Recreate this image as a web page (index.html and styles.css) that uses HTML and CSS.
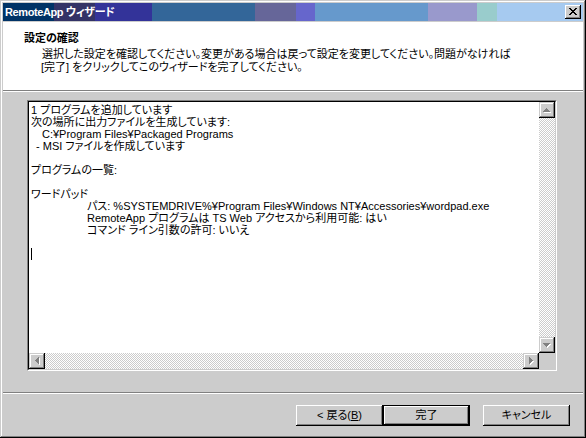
FILE: index.html
```html
<!DOCTYPE html>
<html lang="ja">
<head>
<meta charset="utf-8">
<title>RemoteApp ウィザード</title>
<link rel="stylesheet" href="styles.css">
</head>
<body>
<div class="window">
  <div class="titlebar">
    <span class="title-text">RemoteApp ウィザード</span>
    <span class="close-btn">
      <svg width="16" height="14" viewBox="0 0 16 14" shape-rendering="crispEdges">
        <g fill="#000">
          <rect x="4" y="3" width="2" height="1"/><rect x="10" y="3" width="2" height="1"/>
          <rect x="5" y="4" width="2" height="1"/><rect x="9" y="4" width="2" height="1"/>
          <rect x="6" y="5" width="4" height="1"/>
          <rect x="7" y="6" width="2" height="1"/>
          <rect x="6" y="7" width="4" height="1"/>
          <rect x="5" y="8" width="2" height="1"/><rect x="9" y="8" width="2" height="1"/>
          <rect x="4" y="9" width="2" height="1"/><rect x="10" y="9" width="2" height="1"/>
        </g>
      </svg>
    </span>
  </div>
  <div class="client">
    <div class="header">
      <div class="header-title">設定の確認</div>
      <div class="header-desc">
        <div>選択した設定を確認してください。変更がある場合は戻って設定を変更してください。問題がなければ</div>
        <div class="desc-2">[完了] をクリックしてこのウィザードを完了してください。</div>
      </div>
    </div>
    <div class="main">
      <div class="field">
        <div class="field-inner">
          <div class="text">
            <div class="line">1 プログラムを追加しています</div>
            <div class="line">次の場所に出力ファイルを生成しています:</div>
            <div class="line ind-a">C:¥Program Files¥Packaged Programs</div>
            <div class="line ind-b">- MSI ファイルを作成しています</div>
            <div class="line"></div>
            <div class="line">プログラムの一覧:</div>
            <div class="line"></div>
            <div class="line">ワードパッド</div>
            <div class="line ind-tab">パス: %SYSTEMDRIVE%¥Program Files¥Windows NT¥Accessories¥wordpad.exe</div>
            <div class="line ind-tab">RemoteApp プログラムは TS Web アクセスから利用可能: はい</div>
            <div class="line ind-tab">コマンド ライン引数の許可: いいえ</div>
            <div class="line"></div>
            <div class="line"><span class="caret"></span></div>
          </div>
          <div class="vscroll">
            <span class="sbtn">
              <svg width="16" height="16" viewBox="0 0 16 16" shape-rendering="crispEdges">
                <g fill="#fff"><rect x="8" y="7" width="1" height="1"/><rect x="7" y="8" width="3" height="1"/><rect x="6" y="9" width="5" height="1"/><rect x="5" y="10" width="7" height="1"/></g>
                <g fill="#808080"><rect x="7" y="6" width="1" height="1"/><rect x="6" y="7" width="3" height="1"/><rect x="5" y="8" width="5" height="1"/><rect x="4" y="9" width="7" height="1"/></g>
              </svg>
            </span>
            <span class="track"></span>
            <span class="sbtn">
              <svg width="16" height="16" viewBox="0 0 16 16" shape-rendering="crispEdges">
                <g fill="#fff"><rect x="5" y="7" width="7" height="1"/><rect x="6" y="8" width="5" height="1"/><rect x="7" y="9" width="3" height="1"/><rect x="8" y="10" width="1" height="1"/></g>
                <g fill="#808080"><rect x="4" y="6" width="7" height="1"/><rect x="5" y="7" width="5" height="1"/><rect x="6" y="8" width="3" height="1"/><rect x="7" y="9" width="1" height="1"/></g>
              </svg>
            </span>
          </div>
          <div class="hscroll">
            <span class="sbtn">
              <svg width="16" height="16" viewBox="0 0 16 16" shape-rendering="crispEdges">
                <g fill="#fff"><rect x="7" y="8" width="1" height="1"/><rect x="8" y="7" width="1" height="3"/><rect x="9" y="6" width="1" height="5"/><rect x="10" y="5" width="1" height="7"/></g>
                <g fill="#808080"><rect x="6" y="7" width="1" height="1"/><rect x="7" y="6" width="1" height="3"/><rect x="8" y="5" width="1" height="5"/><rect x="9" y="4" width="1" height="7"/></g>
              </svg>
            </span>
            <span class="track"></span>
            <span class="sbtn">
              <svg width="16" height="16" viewBox="0 0 16 16" shape-rendering="crispEdges">
                <g fill="#fff"><rect x="7" y="5" width="1" height="7"/><rect x="8" y="6" width="1" height="5"/><rect x="9" y="7" width="1" height="3"/><rect x="10" y="8" width="1" height="1"/></g>
                <g fill="#808080"><rect x="6" y="4" width="1" height="7"/><rect x="7" y="5" width="1" height="5"/><rect x="8" y="6" width="1" height="3"/><rect x="9" y="7" width="1" height="1"/></g>
              </svg>
            </span>
          </div>
          <div class="corner"></div>
        </div>
      </div>
    </div>
    <div class="footer">
      <button class="btn">&lt; 戻る(<u>B</u>)</button>
      <button class="btn btn-default"><span>完了</span></button>
      <button class="btn btn-cancel">キャンセル</button>
    </div>
  </div>
</div>
</body>
</html>
```
FILE: styles.css
```css
* { box-sizing: border-box; }

html, body {
  margin: 0;
  padding: 0;
  background: #cccccc;
}

body {
  font-family: "Liberation Sans", "Noto Sans CJK JP", sans-serif;
  font-size: 11px;
  color: #000;
  font-feature-settings: "palt";
}

.window {
  width: 586px;
  height: 438px;
  padding: 3px;
  background: #cccccc;
  box-shadow: inset -1px -1px #000, inset 1px 1px #cccccc, inset -2px -2px #808080, inset 2px 2px #ffffff;
  display: flex;
  flex-direction: column;
}

.titlebar {
  height: 18px;
  margin-bottom: 1px;
  display: flex;
  align-items: center;
  padding: 0 2px;
  background: linear-gradient(to right,
    #003366 0 51px,
    #333366 51px 92px,
    #333399 92px 149px,
    #336699 149px 252px,
    #666699 252px 293px,
    #6666cc 293px 312px,
    #6699cc 312px 425px,
    #9999cc 425px 474px,
    #99cccc 474px 494px,
    #a6caf0 494px 100%);
}

.title-text {
  color: #fff;
  font-weight: bold;
  font-size: 11px;
  line-height: 18px;
  letter-spacing: -0.4px;
}

.close-btn {
  margin-left: auto;
  width: 16px;
  height: 14px;
  background: #cccccc;
  box-shadow: inset -1px -1px #000, inset 1px 1px #fff, inset -2px -2px #808080;
  display: flex;
}

.client {
  flex: 1;
  display: flex;
  flex-direction: column;
}

.header {
  height: 69px;
  background: #fff;
  border-bottom: 1px solid #808080;
  box-shadow: 0 1px 0 #fff;
  margin-bottom: 1px;
  padding: 9px 0 0 21px;
}

.header-title {
  font-weight: bold;
  line-height: 14px;
}

.header-desc {
  padding-left: 18px;
  margin-top: 3px;
  line-height: 13px;
}

.desc-2 {
  margin-left: -1px;
}

.main {
  flex: 1;
  padding: 8px 26px 0 24px;
}

.field {
  height: 271px;
  border: 1px solid;
  border-color: #808080 #fff #fff #808080;
}

.field-inner {
  height: 100%;
  border: 1px solid;
  border-color: #000 #cccccc #cccccc #000;
  background: #fff;
  display: grid;
  grid-template-columns: 1fr 16px;
  grid-template-rows: 1fr 16px;
}

.text {
  padding: 2px 0 0 2px;
  overflow: hidden;
}

.line {
  height: 12px;
  line-height: 12px;
  white-space: pre;
}

.ind-a { padding-left: 11px; }
.ind-b { padding-left: 5px; }
.ind-tab { padding-left: 56px; }

.caret {
  display: inline-block;
  width: 1px;
  height: 12px;
  background: #000;
  vertical-align: top;
}

.vscroll {
  display: flex;
  flex-direction: column;
}

.hscroll {
  display: flex;
}

.sbtn {
  width: 16px;
  height: 16px;
  flex: none;
  background: #cccccc;
  box-shadow: inset -1px -1px #000, inset 1px 1px #cccccc, inset -2px -2px #808080, inset 2px 2px #fff;
  display: flex;
}

.track {
  flex: 1;
  background: repeating-conic-gradient(#fff 0 25%, #cccccc 0 50%) 0 0 / 2px 2px;
}

.corner {
  background: #cccccc;
}

.footer {
  height: 43px;
  border-top: 1px solid #808080;
  box-shadow: inset 0 1px 0 #fff;
  display: flex;
  align-items: flex-start;
  padding: 12px 13px 0 0;
  justify-content: flex-end;
}

.btn {
  width: 87px;
  height: 21px;
  padding: 0;
  border: none;
  background: #cccccc;
  font-family: inherit;
  font-size: 11px;
  font-feature-settings: "palt";
  color: #000;
  line-height: 19px;
  box-shadow: inset -1px -1px #000, inset 1px 1px #fff, inset -2px -2px #808080;
}

.btn u {
  text-decoration: underline;
}

.btn-default {
  border: 1px solid #000;
  box-shadow: inset -1px -1px #000, inset 1px 1px #fff, inset -2px -2px #808080;
}

.btn-cancel {
  margin-left: 13px;
}
```
